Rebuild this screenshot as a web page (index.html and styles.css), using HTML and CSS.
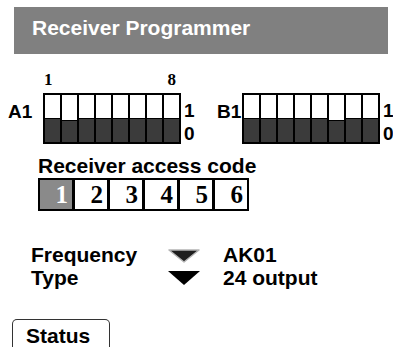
FILE: index.html
```html
<!DOCTYPE html>
<html lang="en">
<head>
  <meta charset="UTF-8">
  <title>Receiver Programmer</title>
  <link rel="stylesheet" href="styles.css">
</head>
<body>
  <div class="title-bar">Receiver Programmer</div>

  <div class="switches">
    <div class="bank">
      <div class="bank-scale"><span>1</span><span>8</span></div>
      <div class="bank-row">
        <span class="bank-name">A1</span>
        <div class="dip">
          <div class="sw"><i class="up"></i><i class="down"></i></div>
          <div class="sw mid"><i class="up"></i><i class="down"></i></div>
          <div class="sw"><i class="up"></i><i class="down"></i></div>
          <div class="sw"><i class="up"></i><i class="down"></i></div>
          <div class="sw"><i class="up"></i><i class="down"></i></div>
          <div class="sw"><i class="up"></i><i class="down"></i></div>
          <div class="sw"><i class="up"></i><i class="down"></i></div>
          <div class="sw"><i class="up"></i><i class="down"></i></div>
        </div>
        <div class="bank-values"><span>1</span><span>0</span></div>
      </div>
    </div>

    <div class="bank bank-b">
      <div class="bank-row">
        <span class="bank-name">B1</span>
        <div class="dip">
          <div class="sw"><i class="up"></i><i class="down"></i></div>
          <div class="sw"><i class="up"></i><i class="down"></i></div>
          <div class="sw"><i class="up"></i><i class="down"></i></div>
          <div class="sw"><i class="up"></i><i class="down"></i></div>
          <div class="sw"><i class="up"></i><i class="down"></i></div>
          <div class="sw mid"><i class="up"></i><i class="down"></i></div>
          <div class="sw"><i class="up"></i><i class="down"></i></div>
          <div class="sw"><i class="up"></i><i class="down"></i></div>
        </div>
        <div class="bank-values"><span>1</span><span>0</span></div>
      </div>
    </div>
  </div>

  <div class="access">
    <div class="access-title">Receiver access code</div>
    <div class="code">
      <span class="code-box active">1</span>
      <span class="code-box">2</span>
      <span class="code-box">3</span>
      <span class="code-box">4</span>
      <span class="code-box">5</span>
      <span class="code-box">6</span>
    </div>
  </div>

  <div class="info">
    <span>Frequency</span>
    <svg class="arrow arrow-dim" width="32" height="14" viewBox="0 0 32 14">
      <polygon points="1,1 31,1 16,13" fill="#1e1e1e" stroke="#b4b4b4" stroke-width="1.5" stroke-linejoin="round"/>
    </svg>
    <span>AK01</span>
    <span>Type</span>
    <svg class="arrow" width="32" height="14" viewBox="0 0 32 14">
      <polygon points="0,0 32,0 16,14" fill="#000"/>
    </svg>
    <span>24 output</span>
  </div>

  <button class="status-btn">Status</button>
</body>
</html>
```

FILE: styles.css
```css
body {
  margin: 0;
  font-family: "Liberation Sans", Arial, sans-serif;
  font-weight: bold;
  color: #000;
  background: #fff;
  overflow: hidden;
}
.title-bar {
  margin: 7px 5px 0 14px;
  height: 47px;
  box-sizing: border-box;
  padding: 9px 0 0 18px;
  background: #808080;
  color: #fff;
  font-size: 21px;
  line-height: 24px;
}
.switches {
  display: flex;
  align-items: flex-end;
  gap: 19px;
  padding-left: 8px;
}
.bank {
  flex-shrink: 0;
}
.bank-scale {
  display: flex;
  justify-content: space-between;
  width: 138px;
  box-sizing: border-box;
  margin: 18px 0 5px 35px;
  padding: 0 5px 0 1px;
  font-family: "Liberation Serif", "Times New Roman", serif;
  font-weight: bold;
  font-size: 17px;
  line-height: 16px;
}
.bank-row {
  display: flex;
  align-items: flex-start;
}
.bank-name {
  width: 35px;
  margin-top: 9px;
  font-size: 19px;
  line-height: 19px;
}
.bank-b .bank-name {
  width: 25px;
}
.dip {
  display: flex;
  gap: 2px;
  border: 2px solid #000;
  background: #000;
}
.sw {
  display: flex;
  flex-direction: column;
  gap: 1px;
  width: 15px;
}
.sw i {
  display: block;
  height: 23px;
}
.sw .up {
  background: #fff;
}
.sw .down {
  background: #3b3b3b;
}
.sw.mid .up {
  height: 25px;
}
.sw.mid .down {
  height: 21px;
}
.bank-values {
  display: flex;
  flex-direction: column;
  width: 14px;
  margin: 6px 0 0 3px;
  font-size: 19px;
  line-height: 23px;
}
.access {
  margin: 9px 0 0 38px;
}
.access-title {
  font-size: 21px;
  line-height: 24px;
}
.code {
  display: flex;
}
.code-box {
  width: 36px;
  height: 33px;
  box-sizing: border-box;
  border: 2px solid #000;
  padding: 1px 4px 0 0;
  margin-left: -1px;
  text-align: right;
  font-family: "Liberation Serif", "Times New Roman", serif;
  font-size: 25px;
  line-height: 28px;
}
.code-box:first-child {
  margin-left: 0;
}
.code-box.active {
  background: #8a8a8a;
  color: #fff;
}
.info {
  display: grid;
  grid-template-columns: 137px 55px auto;
  margin: 32px 0 0 31px;
  font-size: 21px;
  line-height: 23px;
}
.arrow {
  display: block;
  margin-top: 5px;
}
.arrow-dim {
  margin-top: 6px;
}
.status-btn {
  display: block;
  width: 98px;
  height: 30px;
  box-sizing: border-box;
  margin: 30px 0 0 12px;
  padding: 3px 0 0 13px;
  border: 1.5px solid #333;
  border-bottom-color: transparent;
  border-radius: 5px 5px 0 0;
  background: #fff;
  color: #000;
  text-align: left;
  vertical-align: top;
  font: bold 21px/24px "Liberation Sans", Arial, sans-serif;
}
```
